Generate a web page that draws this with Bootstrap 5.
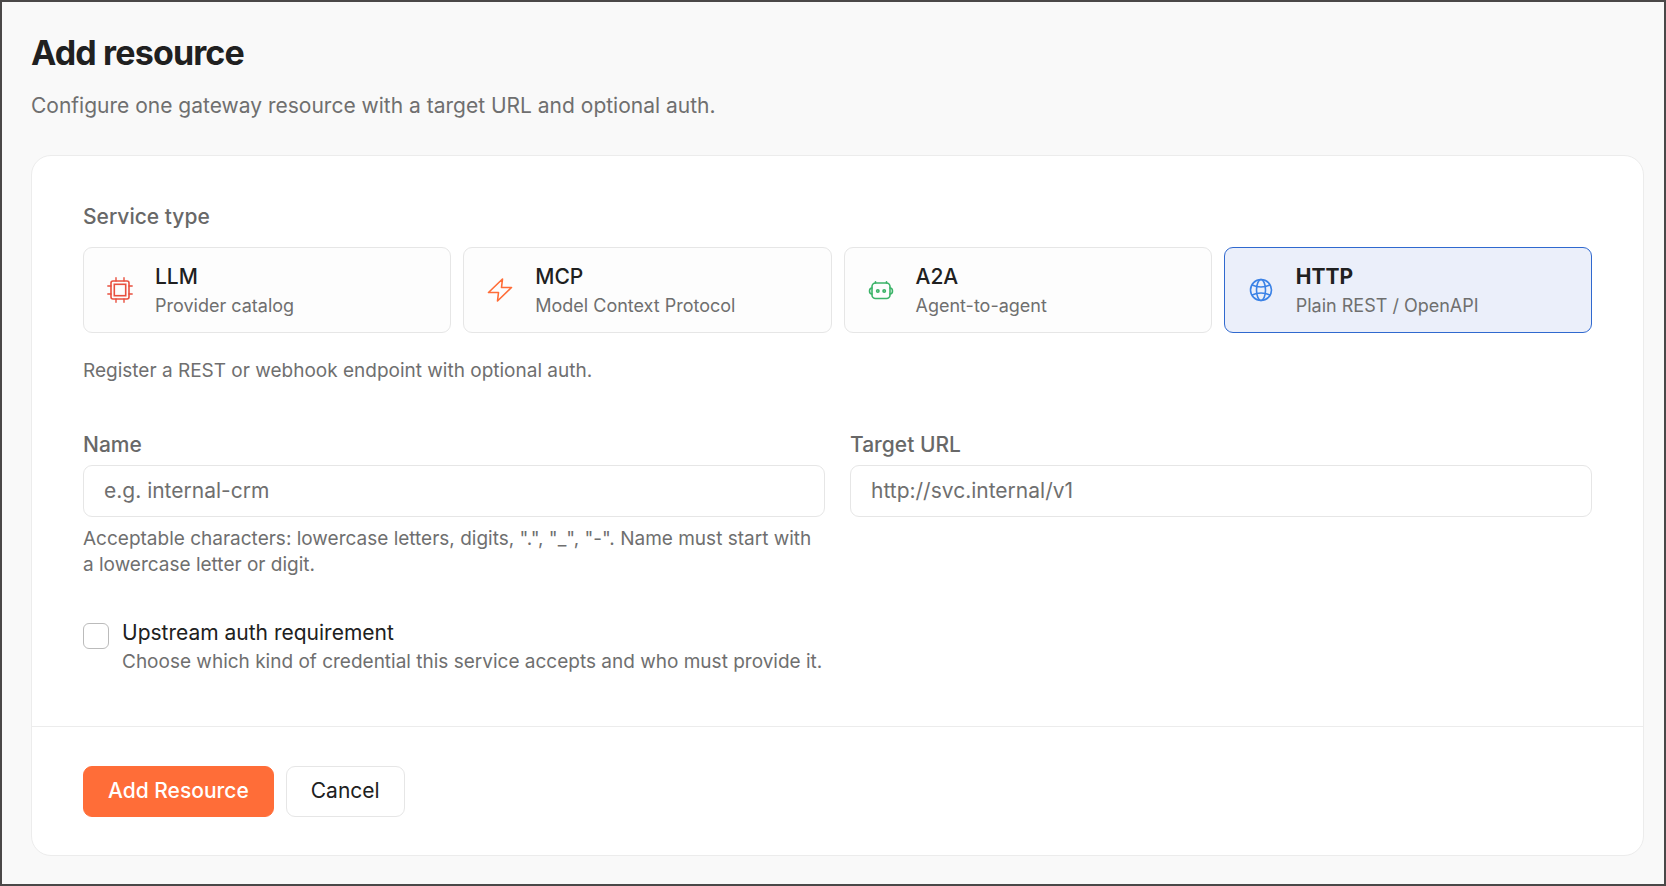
<!DOCTYPE html>
<html lang="en">
<head>
<meta charset="utf-8">
<meta name="viewport" content="width=device-width, initial-scale=1">
<title>Add resource</title>
<link href="https://cdn.jsdelivr.net/npm/bootstrap@5.3.0/dist/css/bootstrap.min.css" rel="stylesheet">
<style>
  :root { --ink: #202020; --muted-ink: #6f6f6f; --line: #e6e6e6; --brand: #ff6d38; --accent: #3069cf; }
  body { font-family: Inter, sans-serif; font-size: 21px; line-height: 28px; color: var(--ink); background: #f9f9f9; }
  .page-frame { min-height: 100vh; border: 2px solid #4a4848; padding: 29px 20px 28px 29px; }
  .page-title { font-size: 34px; line-height: 44px; font-weight: 700; letter-spacing: -0.025em; }
  .hint { color: var(--muted-ink); margin: 17px 0 35px; }
  .panel { border: 1px solid #ececec; border-radius: 20px; background: #fff; }
  .panel-main { padding: 47px 51px 51px; }
  .panel-actions { gap: 12px; padding: 39px 51px 38px; border-top: 1px solid #ececec; }
  .field-label { font-size: 21px; line-height: 28px; color: #686868; font-weight: 500; margin-bottom: 6px; }
  .type-legend { margin-bottom: 16px; }
  .type-grid { display: grid; grid-template-columns: repeat(4, 1fr); gap: 12px; }
  .type-option { display: flex; align-items: center; gap: 21px; height: 86px; padding: 0 22px; border: 1px solid var(--line); border-radius: 9px; background: #fdfdfd; cursor: pointer; }
  .type-option svg { width: 28px; height: 28px; flex: none; }
  .type-text { padding-top: 2px; }
  .type-name { font-weight: 500; line-height: 30px; }
  .type-note { font-size: 18px; line-height: 28px; color: var(--muted-ink); }
  .btn-check:checked + .type-option { border-color: var(--accent); background: #ebeffa; }
  .btn-check:checked + .type-option .type-name { font-weight: 700; }
  .help { font-size: 19px; line-height: 26px; color: var(--muted-ink); margin: 0; }
  .type-help { margin: 25px 0 47px; }
  .name-help { margin-top: 9px; }
  .field-grid { display: grid; grid-template-columns: 1fr 1fr; gap: 25px; }
  .form-control { height: 52px; padding: 0 20px 2px; font-size: 21px; border-color: var(--line); border-radius: 9px; }
  .form-control::placeholder { color: var(--muted-ink); }
  .auth-row { gap: 13px; margin-top: 40px; }
  .auth-label { line-height: 30px; margin-bottom: 1px; }
  .form-check-input.auth-box { width: 26px; height: 26px; margin: 5px 0 0; border: 1px solid #bbb; border-radius: 6px; flex: none; }
  .action { height: 51px; padding: 0 24px 2px; font-size: 21px; border-radius: 9px; }
  .action-main, .action-main:hover { background: var(--brand); border-color: var(--brand); color: #fff; font-weight: 500; }
  .action-plain, .action-plain:hover { background: #fff; border-color: var(--line); color: var(--ink); }
</style>
</head>
<body>
<main class="page-frame">
  <header>
    <h1 class="page-title mb-0">Add resource</h1>
    <p class="hint">Configure one gateway resource with a target URL and optional auth.</p>
  </header>
  <form class="panel">
    <div class="panel-main">
      <fieldset>
        <legend class="field-label type-legend">Service type</legend>
        <div class="type-grid">
          <div>
            <input class="btn-check" type="radio" name="type" id="type-llm">
            <label class="type-option" for="type-llm">
              <svg viewBox="0 0 28 28" fill="none" stroke="#e8503f" stroke-width="1.6" stroke-linecap="round"><rect x="5" y="5" width="18" height="18" rx="2"/><rect x="8.300" y="8.300" width="11.400" height="11.400"/><path stroke-width="1.400" d="M10 5V1.800M18 5V1.800M10 26.200V23M18 26.200V23M5 10H1.800M5 18H1.800M26.200 10H23M26.200 18H23"/></svg>
              <span class="type-text"><span class="type-name d-block">LLM</span><span class="type-note d-block">Provider catalog</span></span>
            </label>
          </div>
          <div>
            <input class="btn-check" type="radio" name="type" id="type-mcp">
            <label class="type-option" for="type-mcp">
              <svg viewBox="0 0 28 28" fill="none" stroke="#ff6d38" stroke-width="1.600" stroke-linejoin="round"><path d="M16.500 3 2.500 16.500H12.500L11.500 25 25.500 11.500H15.500Z"/></svg>
              <span class="type-text"><span class="type-name d-block">MCP</span><span class="type-note d-block">Model Context Protocol</span></span>
            </label>
          </div>
          <div>
            <input class="btn-check" type="radio" name="type" id="type-a2a">
            <label class="type-option" for="type-a2a">
              <svg viewBox="0 0 28 28" fill="none" stroke="#3bb368" stroke-width="1.600" stroke-linecap="round"><rect x="5" y="7" width="18" height="15.500" rx="3.500"/><path d="M8.500 7V5.800M19.500 7V5.800M5 12C1.700 12 1.700 18 5 18M23 12C26.300 12 26.300 18 23 18"/><circle cx="10.800" cy="15" r="1.200"/><circle cx="17.200" cy="15" r="1.200"/></svg>
              <span class="type-text"><span class="type-name d-block">A2A</span><span class="type-note d-block">Agent-to-agent</span></span>
            </label>
          </div>
          <div>
            <input class="btn-check" type="radio" name="type" id="type-http" checked>
            <label class="type-option" for="type-http">
              <svg viewBox="0 0 28 28" fill="none" stroke="#3b82e6" stroke-width="1.600"><circle cx="14" cy="14" r="10.500"/><ellipse cx="14" cy="14" rx="4.500" ry="10.500"/><path d="M5 9Q14 13 23 9M5 19Q14 15 23 19"/></svg>
              <span class="type-text"><span class="type-name d-block">HTTP</span><span class="type-note d-block">Plain REST / OpenAPI</span></span>
            </label>
          </div>
        </div>
      </fieldset>
      <p class="help type-help">Register a REST or webhook endpoint with optional auth.</p>
      <div class="field-grid">
        <div>
          <label class="field-label d-block" for="name">Name</label>
          <input class="form-control" id="name" type="text" placeholder="e.g. internal-crm" aria-describedby="name-help">
          <p class="help name-help" id="name-help">Acceptable characters: lowercase letters, digits, ".", "_", "-". Name must start with a lowercase letter or digit.</p>
        </div>
        <div>
          <label class="field-label d-block" for="target">Target URL</label>
          <input class="form-control" id="target" type="text" placeholder="http://svc.internal/v1">
        </div>
      </div>
      <div class="auth-row d-flex">
        <input class="form-check-input auth-box" type="checkbox" id="auth" aria-describedby="auth-help">
        <div>
          <label class="auth-label d-block" for="auth">Upstream auth requirement</label>
          <p class="help" id="auth-help">Choose which kind of credential this service accepts and who must provide it.</p>
        </div>
      </div>
    </div>
    <div class="panel-actions d-flex">
      <button class="btn action action-main" type="submit">Add Resource</button>
      <button class="btn action action-plain" type="button">Cancel</button>
    </div>
  </form>
</main>
<script src="https://cdn.jsdelivr.net/npm/bootstrap@5.3.0/dist/js/bootstrap.bundle.min.js"></script>
</body>
</html>
